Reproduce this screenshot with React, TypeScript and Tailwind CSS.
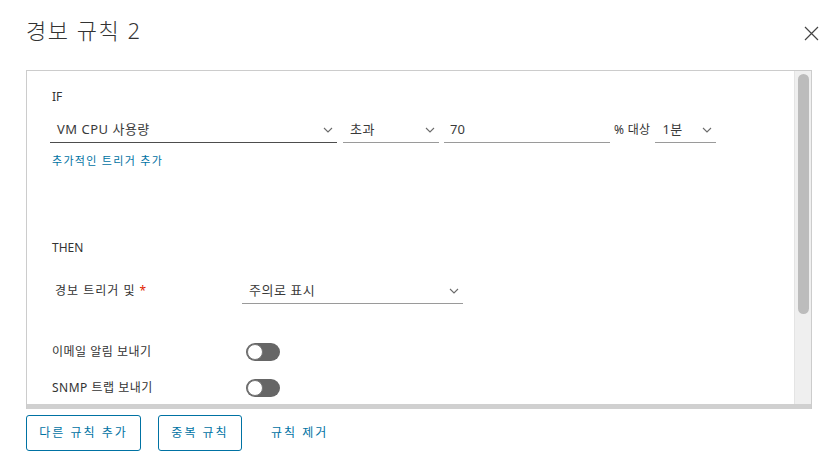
const font = { fontFamily: '"Noto Sans", "Noto Sans CJK KR", sans-serif' }

function Chevron() {
  return (
    <svg width="10" height="6" viewBox="0 0 10 6" className="shrink-0">
      <path d="M1 1 L5 5 L9 1" fill="none" stroke="#6b6b6b" strokeWidth="1.1" />
    </svg>
  )
}

function Select({ value, width, dark }: { value: string; width: string; dark?: boolean }) {
  return (
    <div
      className={`${width} h-[26px] flex items-center justify-between pl-[7px] pr-[4px] border-b ${
        dark ? "border-[#4d4d4d]" : "border-[#9a9a9a]"
      }`}
    >
      <span className="text-[13px] text-[#3a3a3a] tracking-[0.5px]">{value}</span>
      <Chevron />
    </div>
  )
}

function Toggle() {
  return (
    <div className="w-[34px] h-[18px] rounded-full bg-[#666] flex items-center pl-[1px]">
      <div className="w-[16px] h-[16px] rounded-full bg-white border border-[#777]" />
    </div>
  )
}

export default function App() {
  return (
    <div className="w-[828px] h-[472px] bg-white text-[#333] overflow-hidden" style={font}>
      <div className="flex items-start justify-between pl-[26px] pr-[8px] pt-[14px] h-[70px]">
        <h1 className="text-[22px] font-light leading-[32px] tracking-[1.5px] text-[#333]">경보 규칙 2</h1>
        <svg width="15" height="15" viewBox="0 0 15 15" className="mt-[12px] mr-[1px]">
          <path d="M1 1 L14 14 M14 1 L1 14" stroke="#444" strokeWidth="1.2" />
        </svg>
      </div>

      <div className="ml-[26px] w-[786px] h-[339px] border border-b-0 border-[#ccc] flex flex-col">
        <div className="flex flex-1 min-h-0">
          <div className="flex-1 pl-[25px] pt-[18px]">
            <div className="text-[12px] leading-[16px]">IF</div>
            <div className="flex items-center mt-[12px] -ml-[2px]">
              <Select value="VM CPU 사용량" width="w-[287px]" dark />
              <div className="w-[6px]" />
              <Select value="초과" width="w-[96px]" />
              <div className="w-[5px]" />
              <div className="w-[166px] h-[26px] flex items-center pl-[6px] border-b border-[#9a9a9a]">
                <span className="text-[13px] text-[#3a3a3a]">70</span>
              </div>
              <span className="text-[12px] ml-[4px] mr-[5px] tracking-[0.3px]">% 대상</span>
              <Select value="1분" width="w-[61px]" />
            </div>
            <div className="mt-[10px] text-[11px] leading-[16px] text-[#0072a3] tracking-[1.3px]">
              추가적인 트리거 추가
            </div>

            <div className="mt-[71px] text-[12px] leading-[16px]">THEN</div>
            <div className="flex items-center mt-[22px]">
              <span className="w-[190px] pl-[3px] text-[12px] tracking-[1px]">
                경보 트리거 및 <span className="text-[#e12200]">*</span>
              </span>
              <Select value="주의로 표시" width="w-[221px]" />
            </div>

            <div className="flex items-center mt-[39px]">
              <span className="w-[194px] text-[12px] tracking-[0.5px]">이메일 알림 보내기</span>
              <Toggle />
            </div>
            <div className="flex items-center mt-[18px]">
              <span className="w-[194px] text-[12px] tracking-[0.5px]">SNMP 트랩 보내기</span>
              <Toggle />
            </div>
          </div>
          <div className="w-[17px] bg-[#efefef] border-l border-[#e4e4e4] pt-[3px] flex justify-center">
            <div className="w-[11px] h-[240px] rounded-full bg-[#bcbcbc]" />
          </div>
        </div>
        <div className="h-[5px] bg-[#d0d0d0] shrink-0" />
      </div>

      <div className="flex items-center ml-[26px] mt-[6px] gap-[17px]">
        <button className="h-[36px] w-[115px] rounded-[3px] border border-[#0072a3] text-[#0072a3] text-[12px] tracking-[2px]">
          다른 규칙 추가
        </button>
        <button className="h-[36px] w-[84px] rounded-[3px] border border-[#0072a3] text-[#0072a3] text-[12px] tracking-[2px]">
          중복 규칙
        </button>
        <button className="h-[36px] px-[12px] text-[#0072a3] text-[12px] tracking-[2px]">규칙 제거</button>
      </div>
    </div>
  )
}
